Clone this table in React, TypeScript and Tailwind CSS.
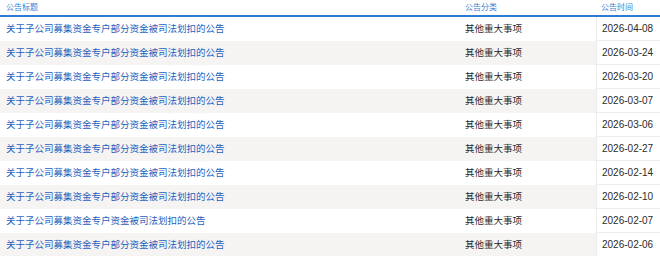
const rows = [
  { title: '关于子公司募集资金专户部分资金被司法划扣的公告', type: '其他重大事项', date: '2026-04-08' },
  { title: '关于子公司募集资金专户部分资金被司法划扣的公告', type: '其他重大事项', date: '2026-03-24' },
  { title: '关于子公司募集资金专户部分资金被司法划扣的公告', type: '其他重大事项', date: '2026-03-20' },
  { title: '关于子公司募集资金专户部分资金被司法划扣的公告', type: '其他重大事项', date: '2026-03-07' },
  { title: '关于子公司募集资金专户部分资金被司法划扣的公告', type: '其他重大事项', date: '2026-03-06' },
  { title: '关于子公司募集资金专户部分资金被司法划扣的公告', type: '其他重大事项', date: '2026-02-27' },
  { title: '关于子公司募集资金专户部分资金被司法划扣的公告', type: '其他重大事项', date: '2026-02-14' },
  { title: '关于子公司募集资金专户部分资金被司法划扣的公告', type: '其他重大事项', date: '2026-02-10' },
  { title: '关于子公司募集资金专户资金被司法划扣的公告', type: '其他重大事项', date: '2026-02-07' },
  { title: '关于子公司募集资金专户部分资金被司法划扣的公告', type: '其他重大事项', date: '2026-02-06' },
];

export default function App() {
  return (
    <div className="w-[660px] h-[256px] overflow-hidden bg-white font-['Liberation_Sans','Noto_Sans_CJK_SC',sans-serif]">
      {/* Header */}
      <div className="flex h-[17px] border-b-2 border-[#2f7bd6] text-[8px] text-[#3a7fd4]">
        <div className="flex-1 pl-[6px] pt-px flex items-center">公告标题</div>
        <div className="w-[137px] pl-[6px] pt-px flex items-center">公告分类</div>
        <div className="w-[64px] pl-[5px] pt-px flex items-center">公告时间</div>
      </div>

      {/* Rows */}
      {rows.map((row, i) => (
        <div key={i} className="flex h-[24px]">
          <div
            className={
              i % 2 === 1
                ? 'flex-1 flex bg-[#f5f4f2] text-[9.5px]'
                : 'flex-1 flex bg-white text-[9.5px]'
            }
          >
            <div className="flex-1 pl-[6px] flex items-center text-[#1f5fbd]">{row.title}</div>
            <div className="w-[137px] pl-[6px] flex items-center text-[#2b2b2b]">{row.type}</div>
          </div>
          <div className="w-[64px] pl-[5px] flex items-center bg-white border-l border-b border-[#ececec] text-[10px] text-[#2b2b2b]">
            {row.date}
          </div>
        </div>
      ))}
    </div>
  );
}
